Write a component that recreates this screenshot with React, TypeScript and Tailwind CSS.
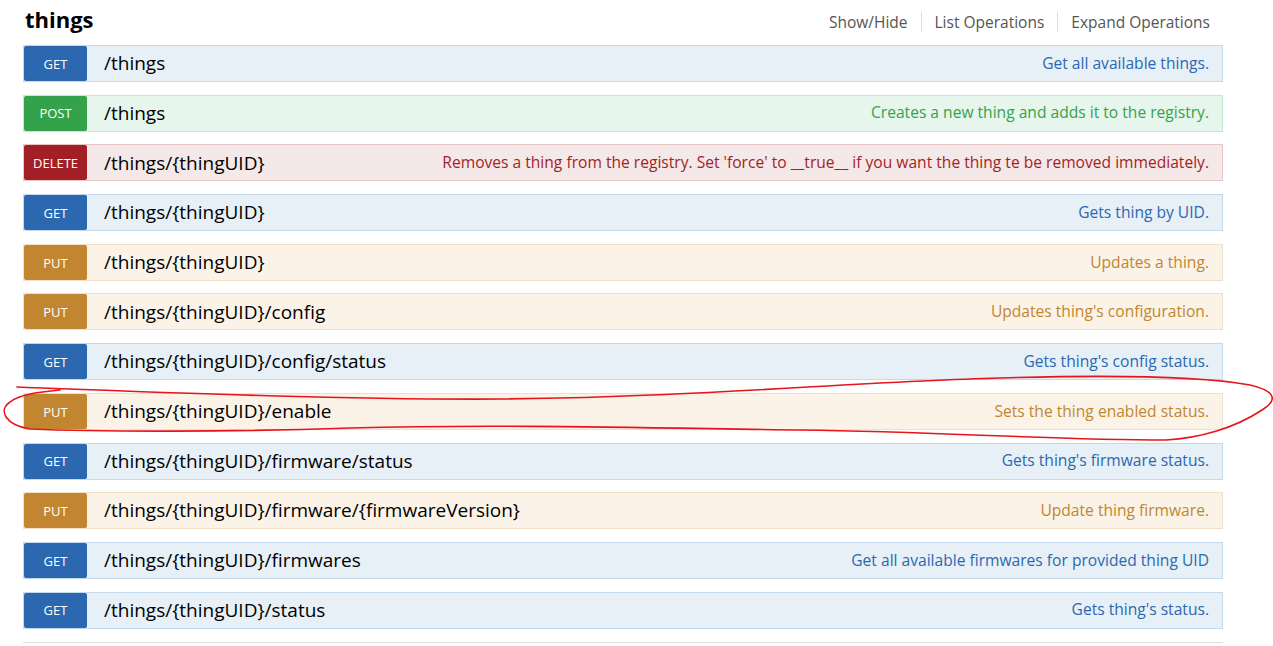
import React from "react";

type Method = "GET" | "POST" | "PUT" | "DELETE";

interface Operation {
  method: Method;
  path: string;
  summary: string;
}

const operations: Operation[] = [
  { method: "GET", path: "/things", summary: "Get all available things." },
  { method: "POST", path: "/things", summary: "Creates a new thing and adds it to the registry." },
  {
    method: "DELETE",
    path: "/things/{thingUID}",
    summary:
      "Removes a thing from the registry. Set 'force' to __true__ if you want the thing te be removed immediately.",
  },
  { method: "GET", path: "/things/{thingUID}", summary: "Gets thing by UID." },
  { method: "PUT", path: "/things/{thingUID}", summary: "Updates a thing." },
  { method: "PUT", path: "/things/{thingUID}/config", summary: "Updates thing's configuration." },
  { method: "GET", path: "/things/{thingUID}/config/status", summary: "Gets thing's config status." },
  { method: "PUT", path: "/things/{thingUID}/enable", summary: "Sets the thing enabled status." },
  { method: "GET", path: "/things/{thingUID}/firmware/status", summary: "Gets thing's firmware status." },
  {
    method: "PUT",
    path: "/things/{thingUID}/firmware/{firmwareVersion}",
    summary: "Update thing firmware.",
  },
  {
    method: "GET",
    path: "/things/{thingUID}/firmwares",
    summary: "Get all available firmwares for provided thing UID",
  },
  { method: "GET", path: "/things/{thingUID}/status", summary: "Gets thing's status." },
];

const styles: Record<Method, { row: string; badge: string; text: string }> = {
  GET: {
    row: "bg-[#e7f0f7] border-[#c3d9ec]",
    badge: "bg-[#2b68b0]",
    text: "text-[#2b68b0]",
  },
  POST: {
    row: "bg-[#e7f6ec] border-[#c3e8d1]",
    badge: "bg-[#34a24a]",
    text: "text-[#34a24a]",
  },
  DELETE: {
    row: "bg-[#f5e8e8] border-[#e8c6c7]",
    badge: "bg-[#a21f25]",
    text: "text-[#a21f25]",
  },
  PUT: {
    row: "bg-[#fbf3e8] border-[#f0e0ca]",
    badge: "bg-[#c1862f]",
    text: "text-[#c1862f]",
  },
};

const HeaderLink = ({ label, first }: { label: string; first?: boolean }) => (
  <li className={`px-[13px] leading-[20px] ${first ? "" : "border-l border-[#dddddd]"}`}>
    <a className="cursor-pointer text-[15.5px] text-[#555555]">{label}</a>
  </li>
);

const OperationRow = ({ op }: { op: Operation }) => {
  const s = styles[op.method];
  return (
    <div className={`flex h-[37px] items-stretch border ${s.row}`}>
      <span
        className={`flex w-[63px] shrink-0 items-center justify-center rounded-[2px] pt-[2px] text-[13px] text-white ${s.badge}`}
      >
        {op.method}
      </span>
      <span className="ml-[17px] flex items-center text-[19px] text-black">{op.path}</span>
      <span className={`ml-auto flex items-center pr-[13px] text-[15.6px] ${s.text}`}>
        {op.summary}
      </span>
    </div>
  );
};

export default function App() {
  return (
    <div
      className="relative h-[646px] w-[1273px] overflow-hidden bg-white"
      style={{ fontFamily: '"Open Sans", "Noto Sans", sans-serif' }}
    >
      <div className="ml-[23px] w-[1200px]">
        {/* Resource heading */}
        <div className="flex h-[45px] items-start justify-between">
          <h2 className="ml-[2px] pt-[4px] text-[22px] font-bold leading-[30px] text-black">things</h2>
          <ul className="mt-[12px] flex">
            <HeaderLink label="Show/Hide" first />
            <HeaderLink label="List Operations" />
            <HeaderLink label="Expand Operations" />
          </ul>
        </div>

        {/* Operations */}
        <div className="flex flex-col gap-[12.7px]">
          {operations.map((op, i) => (
            <OperationRow key={i} op={op} />
          ))}
        </div>

        <div className="mt-[13px] border-t border-[#dddddd]" />
      </div>

      {/* hand-drawn annotation */}
      <svg className="pointer-events-none absolute left-0 top-0" width={1273} height={646}>
        <path
          d="M 17 387 C 150 392, 350 400, 500 399 C 700 397, 850 382, 1000 378 C 1100 375, 1200 376, 1250 385 C 1280 392, 1275 402, 1262 410 C 1235 428, 1200 438, 1166 440 C 1050 440, 950 432, 800 430 C 650 428, 500 424, 350 428 C 230 432, 100 432, 30 429 C 5 425, -2 410, 10 402 C 20 394, 40 392, 60 390"
          fill="none"
          stroke="#e8141b"
          strokeWidth={1.6}
          strokeLinecap="round"
        />
      </svg>
    </div>
  );
}
